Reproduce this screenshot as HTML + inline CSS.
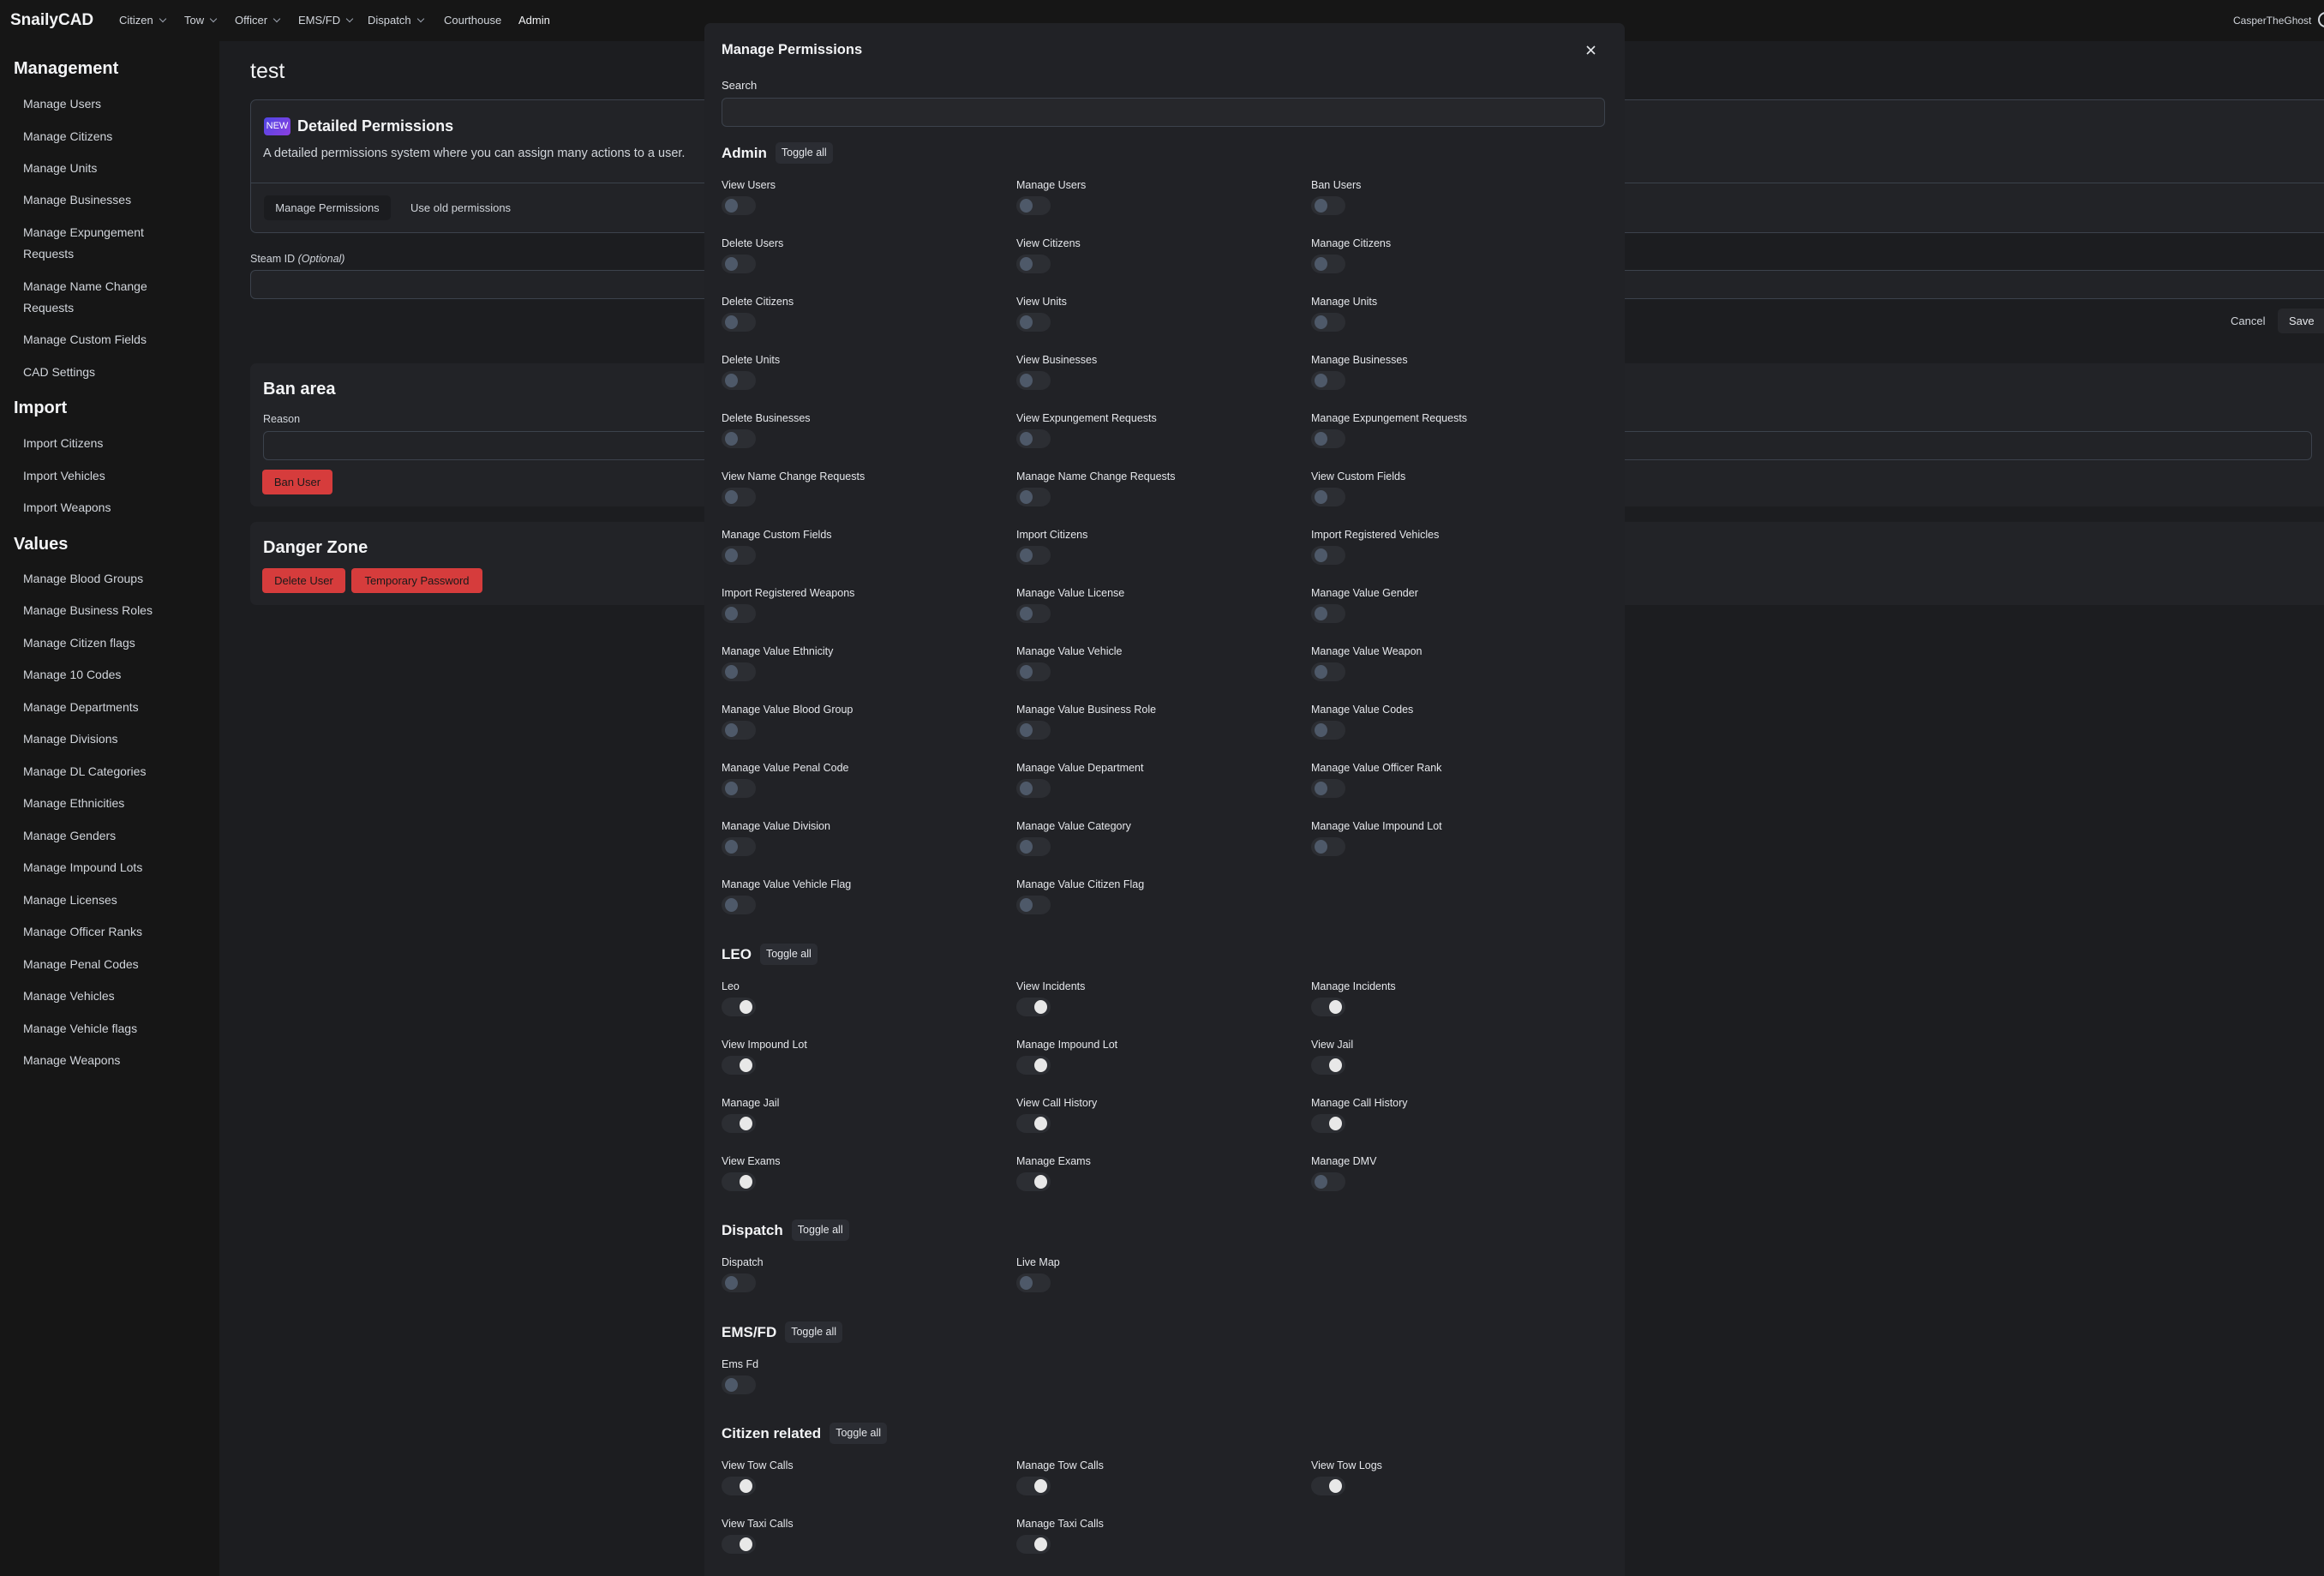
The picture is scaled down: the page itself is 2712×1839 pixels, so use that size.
<!DOCTYPE html>
<html><head><meta charset="utf-8"><style>
*{box-sizing:border-box;margin:0;padding:0}
html,body{width:2712px;height:1839px;overflow:hidden}
body{background:#1c1d20;font-family:"Liberation Sans",sans-serif;color:#e5e7eb;position:relative}
.abs{position:absolute;white-space:nowrap}
#nav{position:absolute;left:0;top:0;width:2712px;height:48px;background:#161616}
#side{position:absolute;left:0;top:48px;width:256px;height:1791px;background:#161616}
.nv{position:absolute;top:16px;font-size:13px;color:#d1d5db;line-height:16px}
.chev{display:inline-block;width:6px;height:6px;border-right:1.3px solid #9ca3af;border-bottom:1.3px solid #9ca3af;transform:rotate(45deg);margin-left:8px;position:relative;top:-3px}
.sh{position:absolute;left:16px;font-size:20px;font-weight:bold;color:#f3f4f6;line-height:24px}
.sl{position:absolute;left:27px;font-size:14px;color:#d1d5db;line-height:25px}
.card{position:absolute;left:292px;width:2440px;background:#222327;border-radius:7px}
.inp{position:absolute;background:#222327;border:1px solid #3c424c;border-radius:6px}
.btnr{position:absolute;background:#d63c3c;color:#1a1a1a;font-size:13px;border-radius:4px;line-height:29px;text-align:center;height:29px}
#modal{position:absolute;left:822px;top:27px;width:1074px;height:1812px;background:#212226;border-radius:7px 7px 0 0}
.sec{position:absolute;left:842px;width:1032px}
.hd{height:25px;display:flex;align-items:center;font-size:17px;font-weight:bold;color:#f3f4f6}
.tg{margin-left:10px;background:#2b2d33;border-radius:5px;font-size:12.5px;font-weight:normal;color:#e5e7eb;height:25px;line-height:25px;padding:0 7px}
.grid{position:absolute;top:50px;left:0;display:grid;grid-template-columns:344px 344px 344px;grid-auto-rows:68px}
.it{position:relative}
.lb{font-size:12.5px;line-height:16px;color:#e5e7eb;margin-top:-8px;white-space:nowrap}
.sw{position:absolute;left:0;top:13px;width:40px;height:22px;border-radius:11px;background:#2c2e33}
.sw::after{content:"";position:absolute;top:3px;left:4px;width:15px;height:16px;border-radius:50%;background:#4e5969}
.sw.on::after{left:21px;background:#e8e8e8}
</style></head><body>
<div id="nav"></div>
<div class="abs" style="left:12px;top:12px;font-size:19px;font-weight:bold;color:#f3f4f6;line-height:24px">SnailyCAD</div>
<div class="nv" style="left:139px">Citizen<span class="chev"></span></div>
<div class="nv" style="left:215px">Tow<span class="chev"></span></div>
<div class="nv" style="left:274px">Officer<span class="chev"></span></div>
<div class="nv" style="left:348px">EMS/FD<span class="chev"></span></div>
<div class="nv" style="left:429px">Dispatch<span class="chev"></span></div>
<div class="nv" style="left:518px">Courthouse</div>
<div class="nv" style="left:605px;color:#f3f4f6">Admin</div>
<div class="nv" style="left:2606px;font-size:12px">CasperTheGhost</div>
<div class="abs" style="left:2705px;top:14px;width:18px;height:18px;border:2px solid #d1d5db;border-radius:50%"></div>

<div id="side"></div>
<div class="sh" style="top:68px">Management</div>
<div class="sl" style="top:109px">Manage Users</div>
<div class="sl" style="top:147px">Manage Citizens</div>
<div class="sl" style="top:184px">Manage Units</div>
<div class="sl" style="top:221px">Manage Businesses</div>
<div class="sl" style="top:259px">Manage Expungement<br>Requests</div>
<div class="sl" style="top:322px">Manage Name Change<br>Requests</div>
<div class="sl" style="top:384px">Manage Custom Fields</div>
<div class="sl" style="top:422px">CAD Settings</div>
<div class="sh" style="top:464px">Import</div>
<div class="sl" style="top:505px">Import Citizens</div>
<div class="sl" style="top:543px">Import Vehicles</div>
<div class="sl" style="top:580px">Import Weapons</div>
<div class="sh" style="top:623px">Values</div>
<div class="sl" style="top:663px">Manage Blood Groups</div>
<div class="sl" style="top:700px">Manage Business Roles</div>
<div class="sl" style="top:738px">Manage Citizen flags</div>
<div class="sl" style="top:775px">Manage 10 Codes</div>
<div class="sl" style="top:813px">Manage Departments</div>
<div class="sl" style="top:850px">Manage Divisions</div>
<div class="sl" style="top:888px">Manage DL Categories</div>
<div class="sl" style="top:925px">Manage Ethnicities</div>
<div class="sl" style="top:963px">Manage Genders</div>
<div class="sl" style="top:1000px">Manage Impound Lots</div>
<div class="sl" style="top:1038px">Manage Licenses</div>
<div class="sl" style="top:1075px">Manage Officer Ranks</div>
<div class="sl" style="top:1113px">Manage Penal Codes</div>
<div class="sl" style="top:1150px">Manage Vehicles</div>
<div class="sl" style="top:1188px">Manage Vehicle flags</div>
<div class="sl" style="top:1225px">Manage Weapons</div>

<div class="abs" style="left:292px;top:67px;font-size:25px;color:#f3f4f6;line-height:32px">test</div>
<div class="card" style="top:116px;height:156px;border:1px solid #3c424c;background:#222327"></div>
<div class="abs" style="left:292px;top:213px;width:2440px;height:1px;background:#3c424c"></div>
<div class="abs" style="left:308px;top:137px;width:31px;height:21px;border-radius:4px;background:linear-gradient(135deg,#4f46e5,#8b3fe0);font-size:11px;color:#fff;text-align:center;line-height:21px">NEW</div>
<div class="abs" style="left:347px;top:136px;font-size:18px;font-weight:bold;color:#f3f4f6;line-height:22px">Detailed Permissions</div>
<div class="abs" style="left:307px;top:170px;font-size:14.5px;color:#d1d5db;line-height:18px">A detailed permissions system where you can assign many actions to a user.</div>
<div class="abs" style="left:308px;top:228px;width:148px;height:29px;background:#1b1c1f;border-radius:5px;font-size:13px;color:#d1d5db;line-height:29px;text-align:center">Manage Permissions</div>
<div class="abs" style="left:479px;top:234px;font-size:13px;color:#d1d5db;line-height:17px">Use old permissions</div>
<div class="abs" style="left:292px;top:294px;font-size:12.5px;color:#d1d5db;line-height:16px">Steam ID <i>(Optional)</i></div>
<div class="inp" style="left:292px;top:315px;width:2440px;height:34px"></div>
<div class="abs" style="left:2603px;top:367px;font-size:13px;color:#d1d5db;line-height:16px">Cancel</div>
<div class="abs" style="left:2658px;top:360px;width:70px;height:29px;background:#26272b;border-radius:5px;font-size:13px;color:#e5e7eb;line-height:29px;padding-left:13px">Save</div>

<div class="card" style="top:424px;height:167px"></div>
<div class="abs" style="left:307px;top:442px;font-size:20px;font-weight:bold;color:#f3f4f6;line-height:24px">Ban area</div>
<div class="abs" style="left:307px;top:481px;font-size:12.5px;color:#d1d5db;line-height:16px">Reason</div>
<div class="inp" style="left:307px;top:503px;width:2391px;height:34px"></div>
<div class="btnr" style="left:306px;top:548px;width:82px">Ban User</div>
<div class="card" style="top:609px;height:97px"></div>
<div class="abs" style="left:307px;top:627px;font-size:20px;font-weight:bold;color:#f3f4f6;line-height:24px">Danger Zone</div>
<div class="btnr" style="left:306px;top:663px;width:97px">Delete User</div>
<div class="btnr" style="left:410px;top:663px;width:153px">Temporary Password</div>

<div id="modal"></div>
<div class="abs" style="left:842px;top:47px;font-size:16.5px;font-weight:bold;color:#f3f4f6;line-height:22px">Manage Permissions</div>
<svg class="abs" style="left:1851px;top:53px" width="11" height="11" viewBox="0 0 11 11"><path d="M1 1L10 10M10 1L1 10" stroke="#e5e7eb" stroke-width="1.6"/></svg>
<div class="abs" style="left:842px;top:92px;font-size:13px;color:#e5e7eb;line-height:16px">Search</div>
<div class="inp" style="left:842px;top:114px;width:1031px;height:34px;background:#26272b"></div>

<div class="sec" style="top:166px"><div class="hd">Admin<span class="tg">Toggle all</span></div><div class="grid">
<div class="it"><div class="lb">View Users</div><div class="sw"></div></div>
<div class="it"><div class="lb">Manage Users</div><div class="sw"></div></div>
<div class="it"><div class="lb">Ban Users</div><div class="sw"></div></div>
<div class="it"><div class="lb">Delete Users</div><div class="sw"></div></div>
<div class="it"><div class="lb">View Citizens</div><div class="sw"></div></div>
<div class="it"><div class="lb">Manage Citizens</div><div class="sw"></div></div>
<div class="it"><div class="lb">Delete Citizens</div><div class="sw"></div></div>
<div class="it"><div class="lb">View Units</div><div class="sw"></div></div>
<div class="it"><div class="lb">Manage Units</div><div class="sw"></div></div>
<div class="it"><div class="lb">Delete Units</div><div class="sw"></div></div>
<div class="it"><div class="lb">View Businesses</div><div class="sw"></div></div>
<div class="it"><div class="lb">Manage Businesses</div><div class="sw"></div></div>
<div class="it"><div class="lb">Delete Businesses</div><div class="sw"></div></div>
<div class="it"><div class="lb">View Expungement Requests</div><div class="sw"></div></div>
<div class="it"><div class="lb">Manage Expungement Requests</div><div class="sw"></div></div>
<div class="it"><div class="lb">View Name Change Requests</div><div class="sw"></div></div>
<div class="it"><div class="lb">Manage Name Change Requests</div><div class="sw"></div></div>
<div class="it"><div class="lb">View Custom Fields</div><div class="sw"></div></div>
<div class="it"><div class="lb">Manage Custom Fields</div><div class="sw"></div></div>
<div class="it"><div class="lb">Import Citizens</div><div class="sw"></div></div>
<div class="it"><div class="lb">Import Registered Vehicles</div><div class="sw"></div></div>
<div class="it"><div class="lb">Import Registered Weapons</div><div class="sw"></div></div>
<div class="it"><div class="lb">Manage Value License</div><div class="sw"></div></div>
<div class="it"><div class="lb">Manage Value Gender</div><div class="sw"></div></div>
<div class="it"><div class="lb">Manage Value Ethnicity</div><div class="sw"></div></div>
<div class="it"><div class="lb">Manage Value Vehicle</div><div class="sw"></div></div>
<div class="it"><div class="lb">Manage Value Weapon</div><div class="sw"></div></div>
<div class="it"><div class="lb">Manage Value Blood Group</div><div class="sw"></div></div>
<div class="it"><div class="lb">Manage Value Business Role</div><div class="sw"></div></div>
<div class="it"><div class="lb">Manage Value Codes</div><div class="sw"></div></div>
<div class="it"><div class="lb">Manage Value Penal Code</div><div class="sw"></div></div>
<div class="it"><div class="lb">Manage Value Department</div><div class="sw"></div></div>
<div class="it"><div class="lb">Manage Value Officer Rank</div><div class="sw"></div></div>
<div class="it"><div class="lb">Manage Value Division</div><div class="sw"></div></div>
<div class="it"><div class="lb">Manage Value Category</div><div class="sw"></div></div>
<div class="it"><div class="lb">Manage Value Impound Lot</div><div class="sw"></div></div>
<div class="it"><div class="lb">Manage Value Vehicle Flag</div><div class="sw"></div></div>
<div class="it"><div class="lb">Manage Value Citizen Flag</div><div class="sw"></div></div>
</div></div>

<div class="sec" style="top:1101px"><div class="hd">LEO<span class="tg">Toggle all</span></div><div class="grid">
<div class="it"><div class="lb">Leo</div><div class="sw on"></div></div>
<div class="it"><div class="lb">View Incidents</div><div class="sw on"></div></div>
<div class="it"><div class="lb">Manage Incidents</div><div class="sw on"></div></div>
<div class="it"><div class="lb">View Impound Lot</div><div class="sw on"></div></div>
<div class="it"><div class="lb">Manage Impound Lot</div><div class="sw on"></div></div>
<div class="it"><div class="lb">View Jail</div><div class="sw on"></div></div>
<div class="it"><div class="lb">Manage Jail</div><div class="sw on"></div></div>
<div class="it"><div class="lb">View Call History</div><div class="sw on"></div></div>
<div class="it"><div class="lb">Manage Call History</div><div class="sw on"></div></div>
<div class="it"><div class="lb">View Exams</div><div class="sw on"></div></div>
<div class="it"><div class="lb">Manage Exams</div><div class="sw on"></div></div>
<div class="it"><div class="lb">Manage DMV</div><div class="sw"></div></div>
</div></div>

<div class="sec" style="top:1423px"><div class="hd">Dispatch<span class="tg">Toggle all</span></div><div class="grid">
<div class="it"><div class="lb">Dispatch</div><div class="sw"></div></div>
<div class="it"><div class="lb">Live Map</div><div class="sw"></div></div>
</div></div>

<div class="sec" style="top:1542px"><div class="hd">EMS/FD<span class="tg">Toggle all</span></div><div class="grid">
<div class="it"><div class="lb">Ems Fd</div><div class="sw"></div></div>
</div></div>

<div class="sec" style="top:1660px"><div class="hd">Citizen related<span class="tg">Toggle all</span></div><div class="grid">
<div class="it"><div class="lb">View Tow Calls</div><div class="sw on"></div></div>
<div class="it"><div class="lb">Manage Tow Calls</div><div class="sw on"></div></div>
<div class="it"><div class="lb">View Tow Logs</div><div class="sw on"></div></div>
<div class="it"><div class="lb">View Taxi Calls</div><div class="sw on"></div></div>
<div class="it"><div class="lb">Manage Taxi Calls</div><div class="sw on"></div></div>
</div></div>
</body></html>
